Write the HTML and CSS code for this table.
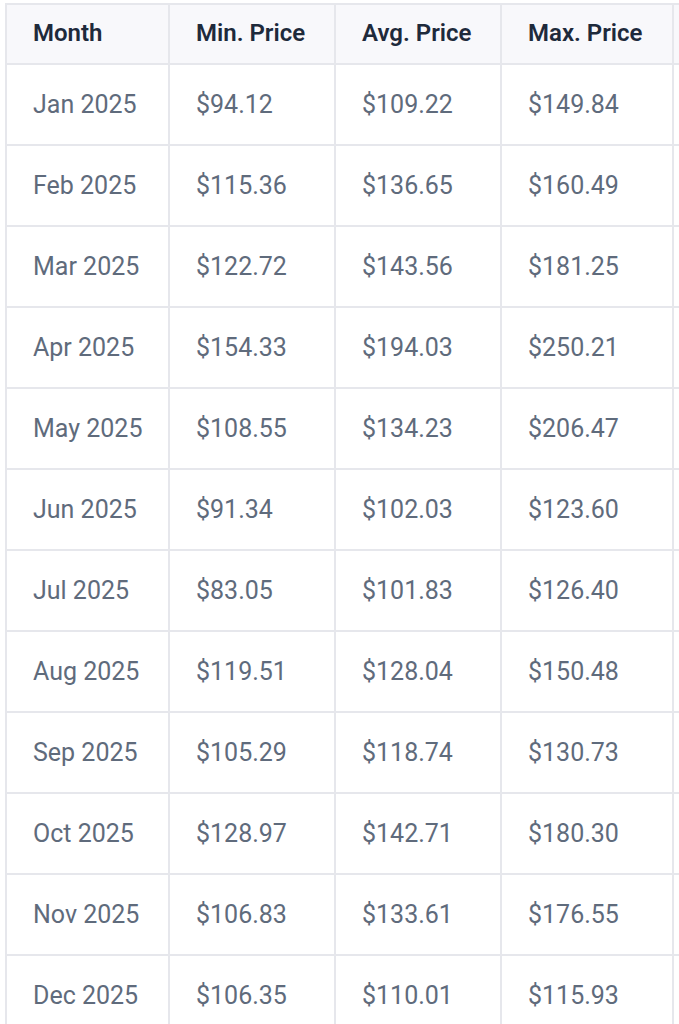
FILE: index.html
```html
<!DOCTYPE html>
<html lang="en">
<head>
<meta charset="utf-8">
<title>Monthly Price Forecast</title>
<link rel="stylesheet" href="styles.css">
</head>
<body>
<div class="wrap">
  <table class="prices">
    <colgroup>
      <col class="c-month">
      <col class="c-min">
      <col class="c-avg">
      <col class="c-max">
      <col class="c-extra">
    </colgroup>
    <thead>
      <tr><th>Month</th><th>Min. Price</th><th>Avg. Price</th><th>Max. Price</th><th></th></tr>
    </thead>
    <tbody>
      <tr><td>Jan 2025</td><td>$94.12</td><td>$109.22</td><td>$149.84</td><td></td></tr>
      <tr><td>Feb 2025</td><td>$115.36</td><td>$136.65</td><td>$160.49</td><td></td></tr>
      <tr><td>Mar 2025</td><td>$122.72</td><td>$143.56</td><td>$181.25</td><td></td></tr>
      <tr><td>Apr 2025</td><td>$154.33</td><td>$194.03</td><td>$250.21</td><td></td></tr>
      <tr><td>May 2025</td><td>$108.55</td><td>$134.23</td><td>$206.47</td><td></td></tr>
      <tr><td>Jun 2025</td><td>$91.34</td><td>$102.03</td><td>$123.60</td><td></td></tr>
      <tr><td>Jul 2025</td><td>$83.05</td><td>$101.83</td><td>$126.40</td><td></td></tr>
      <tr><td>Aug 2025</td><td>$119.51</td><td>$128.04</td><td>$150.48</td><td></td></tr>
      <tr><td>Sep 2025</td><td>$105.29</td><td>$118.74</td><td>$130.73</td><td></td></tr>
      <tr><td>Oct 2025</td><td>$128.97</td><td>$142.71</td><td>$180.30</td><td></td></tr>
      <tr><td>Nov 2025</td><td>$106.83</td><td>$133.61</td><td>$176.55</td><td></td></tr>
      <tr><td>Dec 2025</td><td>$106.35</td><td>$110.01</td><td>$115.93</td><td></td></tr>
    </tbody>
  </table>
</div>
</body>
</html>
```

FILE: styles.css
```css
html, body {
  margin: 0;
  padding: 0;
  overflow: hidden;
  background: #ffffff;
}

.wrap {
  padding: 3px 0 0 5px;
}

.prices {
  border-collapse: separate;
  border-spacing: 0;
  table-layout: fixed;
  width: 729px;
  border-top: 2px solid #e6e7ec;
  border-left: 2px solid #e6e7ec;
  font-family: Roboto, "Liberation Sans", sans-serif;
}

.c-month { width: 163px; }
.c-min { width: 166px; }
.c-avg { width: 166px; }
.c-max { width: 172px; }
.c-extra { width: 62px; }

.prices th,
.prices td {
  box-sizing: border-box;
  text-align: left;
  white-space: nowrap;
  border-right: 2px solid #e6e7ec;
  border-bottom: 2px solid #e6e7ec;
  padding-left: 26px;
  line-height: 29px;
}

.prices th {
  background: #f8f8fb;
  color: #1e2a3b;
  font-size: 24px;
  font-weight: 600;
  height: 60px;
  padding-top: 14px;
  padding-bottom: 15px;
}

.prices td {
  color: #5f6b7c;
  font-size: 25px;
  font-weight: 400;
  height: 81px;
  padding-top: 25px;
  padding-bottom: 25px;
}
```
